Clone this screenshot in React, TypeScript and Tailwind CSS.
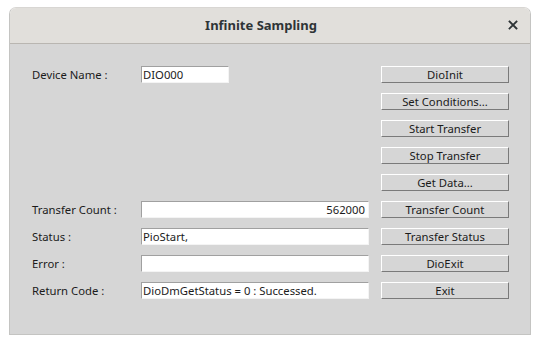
const rows: { label?: string; value?: string; align?: 'right'; short?: boolean; button: string }[] = [
  { label: 'Device Name :', value: 'DIO000', short: true, button: 'DioInit' },
  { button: 'Set Conditions...' },
  { button: 'Start Transfer' },
  { button: 'Stop Transfer' },
  { button: 'Get Data...' },
  { label: 'Transfer Count :', value: '562000', align: 'right', button: 'Transfer Count' },
  { label: 'Status :', value: 'PioStart,', button: 'Transfer Status' },
  { label: 'Error :', value: '', button: 'DioExit' },
  { label: 'Return Code :', value: 'DioDmGetStatus = 0 : Successed.', button: 'Exit' },
];

const App = () => {
  return (
    <div className="w-[540px] h-[345px] bg-white pt-[7px] pl-[9px] font-['Noto_Sans',sans-serif] text-[11.3px] text-[#1b1b1b]">
      <div className="w-[522px] h-[328px] flex flex-col rounded-t-[7px] border border-[#c4c4c2] border-t-[#d8d6d3] overflow-hidden">
        <div className="h-[36px] shrink-0 relative flex items-center justify-center pr-[18px] bg-[#e1dfdb] border-b border-[#b9b6b1]">
          <span className="text-[13px] font-bold text-[#2e3436]">Infinite Sampling</span>
          <span className="absolute right-[11px] top-[11px]">
            <svg width="12" height="12" viewBox="0 0 12 12">
              <path d="M2.5 2.5 L9.5 9.5 M9.5 2.5 L2.5 9.5" stroke="#2e3436" strokeWidth="1.8" strokeLinecap="square" />
            </svg>
          </span>
        </div>
        <div className="flex-1 bg-[#d6d6d6] pt-[22px] pl-[22px]">
          <div className="grid grid-cols-[109px_240px_128px] auto-rows-[17px] gap-y-[10px]">
            {rows.map((r, i) => (
              <div key={i} className="contents">
                <div className="flex items-center leading-none">{r.label}</div>
                <div>
                  {r.value !== undefined && (
                    <div
                      className={`h-[17px] bg-white border border-t-[#a0a0a0] border-l-[#a0a0a0] border-b-[#f4f4f4] border-r-[#f4f4f4] flex items-center leading-none whitespace-nowrap overflow-hidden ${
                        r.short ? 'w-[88px]' : 'w-[228px]'
                      } ${r.align === 'right' ? 'justify-end pr-[3px]' : 'pl-[1px]'}`}
                    >
                      {r.value}
                    </div>
                  )}
                </div>
                <button className="h-[17px] w-[128px] bg-[#d6d6d6] border border-t-white border-l-white border-b-[#7a7a7a] border-r-[#7a7a7a] flex items-center justify-center leading-none text-[11.3px] text-[#1b1b1b]">
                  {r.button}
                </button>
              </div>
            ))}
          </div>
        </div>
      </div>
    </div>
  );
};

export default App;
